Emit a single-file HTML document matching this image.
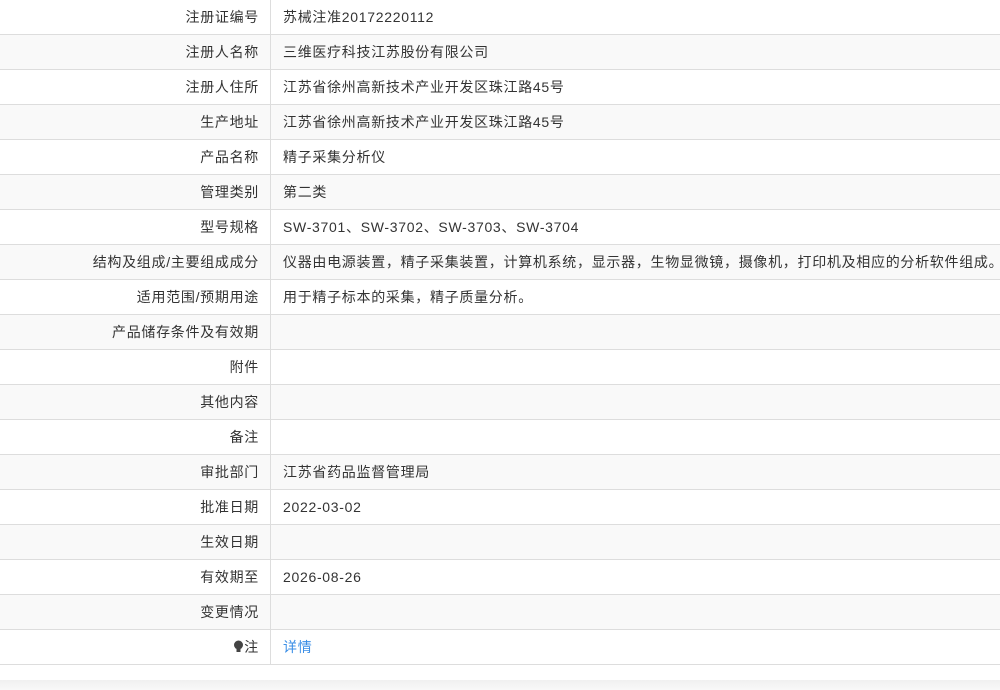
<!DOCTYPE html><html><head><meta charset="utf-8"><style>
body{margin:0;width:1000px;height:690px;overflow:hidden;background:#fff;font-family:"Liberation Sans","Noto Sans CJK SC",sans-serif;font-size:14px;color:#333;letter-spacing:0.7px}
table{border-collapse:collapse;width:1000px;table-layout:fixed}
td{height:34px;padding:0;border-bottom:1px solid #ddd;white-space:nowrap;overflow:hidden}
td.l{width:259px;text-align:right;padding-right:11px;border-right:1px solid #ddd;letter-spacing:0.7px}
td.l span{margin-right:-0.7px}
td.v{padding-left:12px}
tr:nth-child(even) td{background:#f9f9f9}
.foot{position:absolute;top:680px;left:0;width:1000px;height:10px;background:linear-gradient(#f0f0f0,#f8f8f8)}
a{color:#3a8ee6;text-decoration:none}
</style></head><body>
<table>
<tr><td class="l">注册证编号</td><td class="v">苏械注准20172220112</td></tr>
<tr><td class="l">注册人名称</td><td class="v">三维医疗科技江苏股份有限公司</td></tr>
<tr><td class="l">注册人住所</td><td class="v">江苏省徐州高新技术产业开发区珠江路45号</td></tr>
<tr><td class="l">生产地址</td><td class="v">江苏省徐州高新技术产业开发区珠江路45号</td></tr>
<tr><td class="l">产品名称</td><td class="v">精子采集分析仪</td></tr>
<tr><td class="l">管理类别</td><td class="v">第二类</td></tr>
<tr><td class="l">型号规格</td><td class="v">SW-3701、SW-3702、SW-3703、SW-3704</td></tr>
<tr><td class="l">结构及组成/主要组成成分</td><td class="v">仪器由电源装置，精子采集装置，计算机系统，显示器，生物显微镜，摄像机，打印机及相应的分析软件组成。</td></tr>
<tr><td class="l">适用范围/预期用途</td><td class="v">用于精子标本的采集，精子质量分析。</td></tr>
<tr><td class="l">产品储存条件及有效期</td><td class="v"></td></tr>
<tr><td class="l">附件</td><td class="v"></td></tr>
<tr><td class="l">其他内容</td><td class="v"></td></tr>
<tr><td class="l">备注</td><td class="v"></td></tr>
<tr><td class="l">审批部门</td><td class="v">江苏省药品监督管理局</td></tr>
<tr><td class="l">批准日期</td><td class="v">2022-03-02</td></tr>
<tr><td class="l">生效日期</td><td class="v"></td></tr>
<tr><td class="l">有效期至</td><td class="v">2026-08-26</td></tr>
<tr><td class="l">变更情况</td><td class="v"></td></tr>
<tr><td class="l"><svg width="11" height="13" viewBox="0 0 11 13" style="vertical-align:-1px"><circle cx="5.5" cy="5" r="4.5" fill="#444"/><rect x="3.5" y="9" width="4" height="3" fill="#444"/></svg>注</td><td class="v"><a>详情</a></td></tr>
</table>
<div class="foot"></div>
</body></html>
